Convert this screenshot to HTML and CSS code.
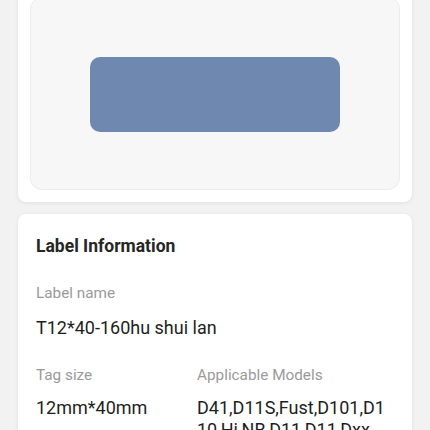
FILE: index.html
```html
<!DOCTYPE html>
<html lang="en">
<head>
    <meta charset="UTF-8">
    <meta name="viewport" content="width=device-width, initial-scale=1.0">
    <title>Label Detail</title>
    <link rel="stylesheet" href="styles.css">
</head>
<body>
    <div class="page">
        <div class="card preview-card">
            <div class="preview">
                <div class="label-shape"></div>
            </div>
        </div>
        <div class="card info-card">
            <h3>Label Information</h3>
            <div class="field">
                <div class="field-name">Label name</div>
                <div class="field-value">T12*40-160hu shui lan</div>
            </div>
            <div class="field-row">
                <div class="field">
                    <div class="field-name">Tag size</div>
                    <div class="field-value">12mm*40mm</div>
                </div>
                <div class="field">
                    <div class="field-name">Applicable Models</div>
                    <div class="field-value models">D41,D11S,Fust,D101,D110,Hi,NB,D11,D11,Dxx</div>
                </div>
            </div>
        </div>
    </div>
</body>
</html>
```

FILE: styles.css
```css
body {
    font-family: Roboto, "Noto Sans", sans-serif;
    background-color: #f2f2f2;
    margin: 0;
    padding: 0;
}
.page {
    margin-top: -15px;
    padding: 0 18px;
    display: flex;
    flex-direction: column;
    gap: 12px;
}
.card {
    background-color: #fff;
    border-radius: 8px;
    box-shadow: 0 1px 4px rgba(0, 0, 0, 0.08);
}
.preview-card {
    padding: 12px;
}
.preview {
    background-color: #f7f7f7;
    border: 1px solid #ececec;
    border-radius: 12px;
    height: 191px;
    display: flex;
    align-items: center;
    justify-content: center;
}
.label-shape {
    width: 250px;
    height: 75px;
    background-color: #6e88b0;
    border-radius: 10px;
    margin-top: 2px;
}
.info-card {
    padding: 21px 18px 30px;
    height: 300px;
}
.info-card h3 {
    margin: 0 0 26px;
    font-size: 17.5px;
    font-weight: bold;
    color: #262626;
    line-height: 22px;
}
.field {
    margin-bottom: 26px;
}
.field-name {
    font-size: 15.3px;
    color: #9a9a9a;
    line-height: 20px;
    margin-bottom: 14px;
}
.field-row .field-name {
    margin-bottom: 12px;
}
.field-value {
    font-size: 18px;
    color: #1e1e1e;
    line-height: 22px;
}
.field-row {
    display: grid;
    grid-template-columns: 161px 1fr;
}
.models {
    word-break: break-all;
}
```
